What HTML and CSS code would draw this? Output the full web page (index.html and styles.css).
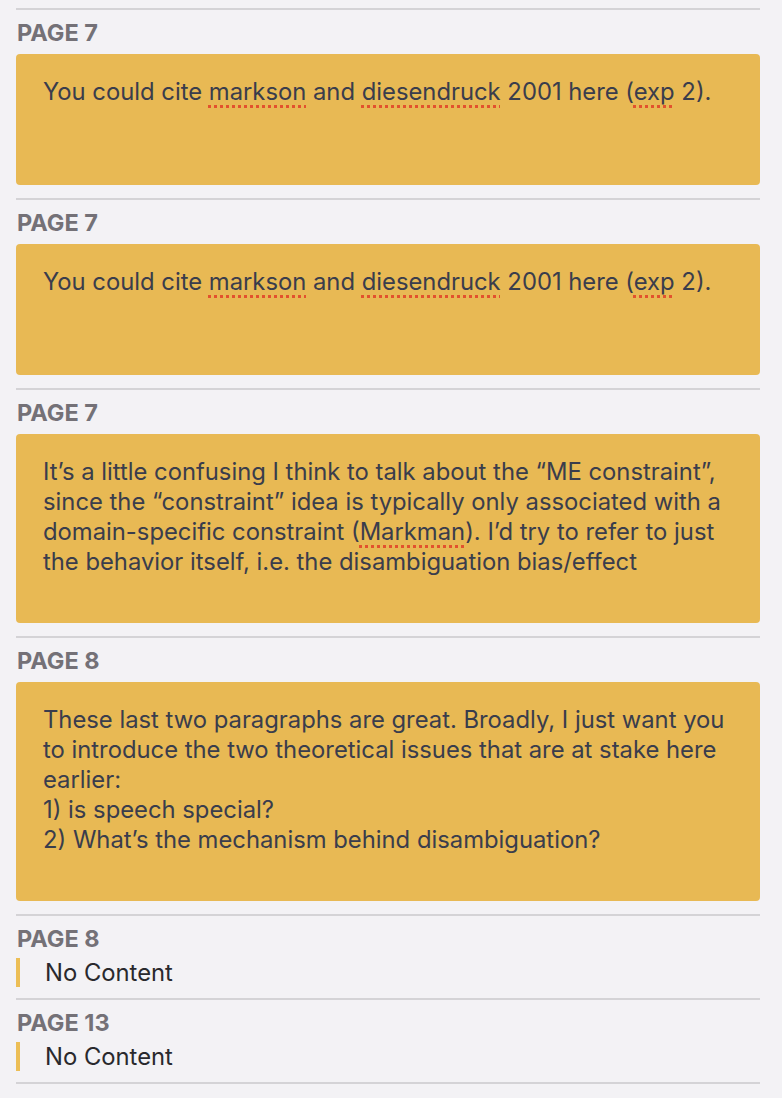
FILE: index.html
```html
<!DOCTYPE html>
<html>
<head>
<meta charset="utf-8">
<link rel="stylesheet" href="styles.css">
</head>
<body>
<div class="list">
  <section class="note">
    <h2 class="page">PAGE 7</h2>
    <div class="card">You could cite <span class="sp">markson</span> and <span class="sp">diesendruck</span> 2001 here (<span class="sp">exp</span> 2).</div>
  </section>
  <section class="note">
    <h2 class="page">PAGE 7</h2>
    <div class="card">You could cite <span class="sp">markson</span> and <span class="sp">diesendruck</span> 2001 here (<span class="sp">exp</span> 2).</div>
  </section>
  <section class="note">
    <h2 class="page">PAGE 7</h2>
    <div class="card">It’s a little confusing I think to talk about the “ME constraint”,<br>since the “constraint” idea is typically only associated with a<br>domain-specific constraint (<span class="sp">Markman</span>). I’d try to refer to just<br>the behavior itself, i.e. the disambiguation bias/effect</div>
  </section>
  <section class="note">
    <h2 class="page">PAGE 8</h2>
    <div class="card">These last two paragraphs are great. Broadly, I just want you<br>to introduce the two theoretical issues that are at stake here<br>earlier:<br>1) is speech special?<br>2) What’s the mechanism behind disambiguation?</div>
  </section>
  <section class="note empty">
    <h2 class="page">PAGE 8</h2>
    <div class="none">No Content</div>
  </section>
  <section class="note empty">
    <h2 class="page">PAGE 13</h2>
    <div class="none">No Content</div>
  </section>
  <div class="rule"></div>
</div>
</body>
</html>
```
FILE: styles.css
```css
html, body {
  margin: 0;
  padding: 0;
  background: #f3f2f5;
}
body {
  font-family: Inter, "Noto Sans", sans-serif;
  padding: 8px 22px 0 16px;
}
.note {
  border-top: 2px solid #d4d3d6;
  padding: 8px 0 13px;
}
.note.empty {
  padding-bottom: 11px;
}
.rule {
  border-top: 2px solid #d4d3d6;
}
.page {
  margin: 0 0 6px 1px;
  font-size: 23.5px;
  line-height: 30px;
  font-weight: 700;
  color: #747177;
  letter-spacing: 0;
}
.card {
  background: #e8b954;
  border-radius: 4px;
  min-height: 131px;
  box-sizing: border-box;
  padding: 23px 20px 46px 27px;
  font-size: 23.8px;
  line-height: 30px;
  color: #3a3d4c;
  white-space: nowrap;
}
.sp {
  text-decoration: underline dotted #e2522e;
  text-decoration-thickness: 3px;
  text-underline-offset: 5px;
}
.none {
  margin-top: -2px;
  border-left: 4px solid #ecbe55;
  padding-left: 25px;
  font-size: 23.8px;
  line-height: 29px;
  color: #29292d;
}
```
